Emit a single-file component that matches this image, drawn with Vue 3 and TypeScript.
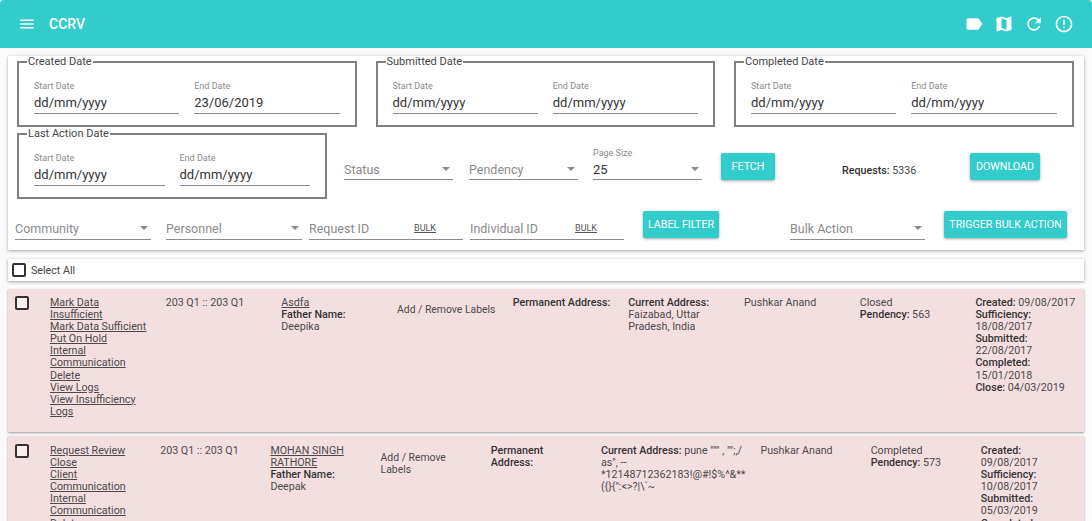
<template>
  <div class="page">
    <header class="topbar">
      <svg class="menu" viewBox="0 0 24 24"><path d="M3 18h18v-2H3v2zm0-5h18v-2H3v2zm0-7v2h18V6H3z" /></svg>
      <span class="brand">CCRV</span>
      <div class="actions">
        <svg class="icon" viewBox="0 0 24 24"><path d="M17.63 5.84C17.27 5.33 16.67 5 16 5L5 5.01C3.9 5.01 3 5.9 3 7v10c0 1.1.9 1.99 2 1.99L16 19c.67 0 1.27-.33 1.63-.84L22 12l-4.37-6.16z" /></svg>
        <svg class="icon" viewBox="0 0 24 24"><path d="M20.5 3l-.16.03L15 5.1 9 3 3.36 4.9c-.21.07-.36.25-.36.48V20.5c0 .28.22.5.5.5l.16-.03L9 18.9l6 2.1 5.64-1.9c.21-.07.36-.25.36-.48V3.5c0-.28-.22-.5-.5-.5zM15 19l-6-2.11V5l6 2.11V19z" /></svg>
        <svg class="icon" viewBox="0 0 24 24"><path d="M17.65 6.35C16.2 4.9 14.21 4 12 4c-4.42 0-7.99 3.58-7.99 8s3.57 8 7.99 8c3.73 0 6.84-2.55 7.73-6h-2.08c-.82 2.33-3.04 4-5.65 4-3.31 0-6-2.69-6-6s2.69-6 6-6c1.66 0 3.14.69 4.22 1.78L13 11h7V4l-2.35 2.35z" /></svg>
        <svg class="icon" viewBox="0 0 24 24"><path d="M11 15h2v2h-2zm0-8h2v6h-2zm.99-5C6.47 2 2 6.48 2 12s4.47 10 9.99 10C17.52 22 22 17.52 22 12S17.52 2 11.99 2zM12 20c-4.42 0-8-3.58-8-8s3.58-8 8-8 8 3.58 8 8-3.58 8-8 8z" /></svg>
      </div>
    </header>

    <section class="card filters">
      <div class="filter-row dates">
        <fieldset v-for="group in topDates" :key="group.title" class="date-group">
          <legend>{{ group.title }}</legend>
          <div class="field">
            <label>Start Date</label>
            <div class="value">{{ group.start }}</div>
          </div>
          <div class="field">
            <label>End Date</label>
            <div class="value">{{ group.end }}</div>
          </div>
        </fieldset>
      </div>

      <div class="filter-row second">
        <fieldset class="date-group last-action">
          <legend>Last Action Date</legend>
          <div class="field">
            <label>Start Date</label>
            <div class="value">dd/mm/yyyy</div>
          </div>
          <div class="field">
            <label>End Date</label>
            <div class="value">dd/mm/yyyy</div>
          </div>
        </fieldset>
        <div class="field select status">
          <label></label>
          <div class="value hint">Status<i class="caret"></i></div>
        </div>
        <div class="field select pendency">
          <label></label>
          <div class="value hint">Pendency<i class="caret"></i></div>
        </div>
        <div class="field select page-size">
          <label>Page Size</label>
          <div class="value">25<i class="caret"></i></div>
        </div>
        <button class="btn fetch">Fetch</button>
        <div class="requests"><b>Requests:</b> 5336</div>
        <button class="btn download">Download</button>
      </div>

      <div class="filter-row third">
        <div class="field select community">
          <div class="value hint">Community<i class="caret"></i></div>
        </div>
        <div class="field select personnel">
          <div class="value hint">Personnel<i class="caret"></i></div>
        </div>
        <div class="field request-id">
          <div class="value hint">Request ID<u class="bulk">BULK</u></div>
        </div>
        <div class="field individual-id">
          <div class="value hint">Individual ID<u class="bulk">BULK</u></div>
        </div>
        <button class="btn label-filter">Label Filter</button>
        <div class="field select bulk-action">
          <div class="value hint">Bulk Action<i class="caret"></i></div>
        </div>
        <button class="btn trigger">Trigger Bulk Action</button>
      </div>
    </section>

    <section class="card select-all">
      <span class="check"></span>
      <span>Select All</span>
    </section>

    <article v-for="row in rows" :key="row.name" class="request">
      <span class="check row-check"></span>
      <div class="columns">
        <div class="col links">
          <a v-for="link in row.links" :key="link">{{ link }}</a>
        </div>
        <div class="col">203 Q1 :: 203 Q1</div>
        <div class="col">
          <a>{{ row.name }}</a>
          <div><b>Father Name:</b></div>
          <div>{{ row.father }}</div>
        </div>
        <div class="col labels">Add / Remove Labels</div>
        <div class="col"><b>Permanent Address:</b></div>
        <div class="col"><b>Current Address:</b> {{ row.address }}</div>
        <div class="col">Pushkar Anand</div>
        <div class="col">
          <div>{{ row.status }}</div>
          <div><b>Pendency:</b> {{ row.pendency }}</div>
        </div>
        <div class="col">
          <div v-for="d in row.dates" :key="d[0]"><b>{{ d[0] }}:</b> {{ d[1] }}</div>
        </div>
      </div>
    </article>
  </div>
</template>

<script setup lang="ts">
interface DateGroup {
  title: string;
  start: string;
  end: string;
}

interface RequestRow {
  name: string;
  father: string;
  address: string;
  status: string;
  pendency: number;
  links: string[];
  dates: [string, string][];
}

const topDates: DateGroup[] = [
  { title: "Created Date", start: "dd/mm/yyyy", end: "23/06/2019" },
  { title: "Submitted Date", start: "dd/mm/yyyy", end: "dd/mm/yyyy" },
  { title: "Completed Date", start: "dd/mm/yyyy", end: "dd/mm/yyyy" },
];

const rows: RequestRow[] = [
  {
    name: "Asdfa",
    father: "Deepika",
    address: "Faizabad, Uttar Pradesh, India",
    status: "Closed",
    pendency: 563,
    links: ["Mark Data Insufficient", "Mark Data Sufficient", "Put On Hold", "Internal Communication", "Delete", "View Logs", "View Insufficiency Logs"],
    dates: [["Created", "09/08/2017"], ["Sufficiency", "18/08/2017"], ["Submitted", "22/08/2017"], ["Completed", "15/01/2018"], ["Close", "04/03/2019"]],
  },
  {
    name: "MOHAN SINGH RATHORE",
    father: "Deepak",
    address: "pune \"\"\" , \"\";,/ as\", -- *12148712362183!@#!$%^&** ({}{\":<>?|\\`~",
    status: "Completed",
    pendency: 573,
    links: ["Request Review", "Close", "Client Communication", "Internal Communication", "Delete", "View Logs"],
    dates: [["Created", "09/08/2017"], ["Sufficiency", "10/08/2017"], ["Submitted", "05/03/2019"], ["Completed", "05/03/2019"]],
  },
];
</script>

<style>
html,
body {
  margin: 0;
  height: 100%;
  overflow: hidden;
  background: #fff;
}
</style>

<style scoped>
.page {
  height: 521px;
  overflow: hidden;
  border-radius: 4px 4px 0 0;
  background: #fafafa;
  font-family: Roboto, "Liberation Sans", sans-serif;
  font-size: 10.7px;
  color: #4a4a4a;
}

.topbar {
  display: flex;
  align-items: center;
  height: 48px;
  padding: 0 18px;
  box-sizing: border-box;
  background: #33cccc;
  color: #fff;
}

.menu {
  width: 18px;
  height: 18px;
  fill: #fff;
}

.brand {
  margin-left: 13px;
  font-size: 14px;
  font-weight: 500;
}

.actions {
  display: flex;
  gap: 10px;
  margin-left: auto;
}

.icon {
  width: 20px;
  height: 20px;
  fill: #fff;
}

.card {
  margin: 0 8px;
  background: #fff;
  box-shadow: 0 1px 3px rgba(0, 0, 0, 0.35);
}

.filters {
  height: 194px;
  margin-top: 8px;
  padding: 0 9px;
  box-sizing: border-box;
}

.filter-row {
  display: flex;
}

.dates {
  gap: 19px;
}

.date-group {
  display: flex;
  gap: 15px;
  width: 339.5px;
  height: 71px;
  margin: 0;
  padding: 0 15px;
  box-sizing: border-box;
  border: 2px solid #808080;
  min-inline-size: 0;
}

.date-group legend {
  margin-left: -7px;
  padding: 0 1px;
  font-size: 11px;
  line-height: 12px;
  color: #444;
}

.date-group .field {
  flex: 1;
  margin-top: 12px;
}

.last-action {
  width: 310px;
}

.second {
  align-items: flex-start;
  margin-top: 1px;
}

.field label {
  display: block;
  height: 12px;
  font-size: 9px;
  line-height: 12px;
  color: #8a8a8a;
}

.value {
  display: flex;
  align-items: center;
  height: 21px;
  border-bottom: 1px solid #8c8c8c;
  font-size: 13px;
  color: #333;
}

.select .value {
  height: 20px;
}

.third .value {
  height: 18px;
  padding-bottom: 2px;
}

.hint {
  font-size: 12.5px;
  color: #8a8a8a;
}

.caret {
  width: 0;
  height: 0;
  margin-left: auto;
  margin-right: 3px;
  border-left: 4px solid transparent;
  border-right: 4px solid transparent;
  border-top: 4px solid #8a8a8a;
}

.bulk {
  margin-left: auto;
  margin-right: 27px;
  font-size: 9px;
  color: #555;
}

.select.status {
  width: 109px;
  margin: 19px 0 0 17px;
}

.select.pendency {
  width: 109px;
  margin: 19px 0 0 16px;
}

.select.page-size {
  width: 109px;
  margin: 19px 0 0 15px;
}

.btn {
  height: 27px;
  padding: 0;
  border: none;
  border-radius: 2px;
  background: #33cccc;
  box-shadow: 0 1px 3px rgba(0, 0, 0, 0.35);
  color: #fff;
  font-family: inherit;
  font-size: 10.7px;
  font-weight: 400;
  text-transform: uppercase;
}

.fetch {
  width: 54px;
  margin: 25px 0 0 19px;
}

.requests {
  width: 80px;
  margin: 36px 0 0 67px;
}

.requests b {
  font-weight: 500;
  color: #333;
}

.download {
  width: 70px;
  margin: 25px 0 0 48px;
}

.third {
  align-items: flex-start;
  margin-top: 12px;
  margin-left: -2px;
}

.third .field {
  margin-top: 8px;
}

.community,
.personnel {
  width: 136px;
}

.personnel {
  margin-left: 15px;
}

.request-id,
.individual-id {
  width: 154px;
  margin-left: 7px;
}

.label-filter {
  width: 76px;
  margin-left: 19px;
}

.bulk-action {
  width: 135px;
  margin-left: 71px;
}

.trigger {
  width: 123px;
  margin-left: 19px;
}

.select-all {
  display: flex;
  align-items: center;
  gap: 5px;
  height: 22px;
  margin-top: 9px;
  padding-left: 4px;
  color: #444;
}

.check {
  flex: none;
  width: 10px;
  height: 10px;
  border: 2px solid #333;
  border-radius: 2px;
}

.request {
  display: flex;
  margin: 8px 8px 0;
  padding: 7px 8px 14px 7px;
  background: #f4dfe0;
  box-shadow: 0 1px 2px rgba(0, 0, 0, 0.4);
}

.request + .request {
  margin-top: 4px;
  padding-top: 8px;
}

.row-check {
  margin-right: 21px;
  background: #f9eeee;
}

.columns {
  flex: 1;
  display: flex;
  gap: 15px;
  padding-top: 1px;
  line-height: 12.1px;
}

.col {
  flex: 1 1 0;
}

.col b {
  font-weight: 500;
  color: #333;
}

.col a {
  text-decoration: underline;
  display: block;
}

.labels {
  margin-top: 7px;
  font-size: 10.4px;
}
</style>
